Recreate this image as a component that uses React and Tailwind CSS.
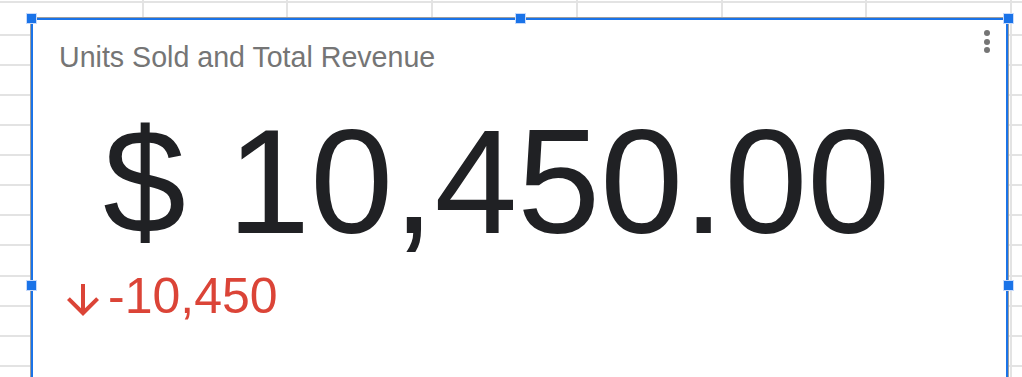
import React from "react";

const rowHeights = [3, 32.5, ...Array(12).fill(30.15)];
const colWidths = [143.5, 144.8, 144.8, 144.8, 144.8, 144.8, 144.8, 144.8];

function Handle({ className }) {
  return (
    <div
      className={
        "absolute w-[11px] h-[11px] bg-[#1a73e8] border border-[#c6dafc] " +
        className
      }
    />
  );
}

export default function App() {
  return (
    <div
      className="relative w-[1022px] h-[377px] overflow-hidden bg-white"
      style={{ fontFamily: '"Liberation Sans", Arial, sans-serif' }}
    >
      {/* spreadsheet grid */}
      <div className="flex flex-col">
        {rowHeights.map((h, r) => (
          <div key={r} className="flex shrink-0" style={{ height: h }}>
            {colWidths.map((w, c) => (
              <div
                key={c}
                className="shrink-0 border-r-2 border-b-2 border-[#e3e3e3] box-border"
                style={{ width: w, height: h }}
              />
            ))}
          </div>
        ))}
      </div>

      {/* chart */}
      <div className="absolute left-[30px] top-[17px] w-[979px] h-[535px] border border-[#9e9e9e] bg-white">
        <div className="w-full h-full border-2 border-[#1a73e8] flex flex-col">
          <div className="flex justify-between items-start pl-[26px] pr-[16px] pt-[10px]">
            <div className="mt-[13px] text-[28.6px] leading-none text-[#757575] whitespace-nowrap">
              Units Sold and Total Revenue
            </div>
            <div className="flex flex-col gap-[2.7px]">
              <div className="w-[6px] h-[6px] rounded-full bg-[#757575]" />
              <div className="w-[6px] h-[6px] rounded-full bg-[#757575]" />
              <div className="w-[6px] h-[6px] rounded-full bg-[#757575]" />
            </div>
          </div>
          <div className="mt-[35px] pl-[70px] text-[149px] leading-none text-[#202124] whitespace-nowrap">
            $ 10,450.00
          </div>
          <div className="mt-[15px] flex items-start pl-[26px] text-[#db4437]">
            <svg
              width="48"
              height="48"
              viewBox="0 0 24 24"
              className="mt-[5px] shrink-0"
              fill="#db4437"
            >
              <path d="M20 12l-1.41-1.41L13 16.17V4h-2v12.17l-5.58-5.59L4 12l8 8 8-8z" />
            </svg>
            <div className="ml-[1px] text-[50px] leading-none">-10,450</div>
          </div>
        </div>
        <Handle className="left-[-5px] top-[-5px]" />
        <Handle className="left-[484px] top-[-5px]" />
        <Handle className="left-[972px] top-[-5px]" />
        <Handle className="left-[-5px] top-[262px]" />
        <Handle className="left-[972px] top-[262px]" />
      </div>
    </div>
  );
}
